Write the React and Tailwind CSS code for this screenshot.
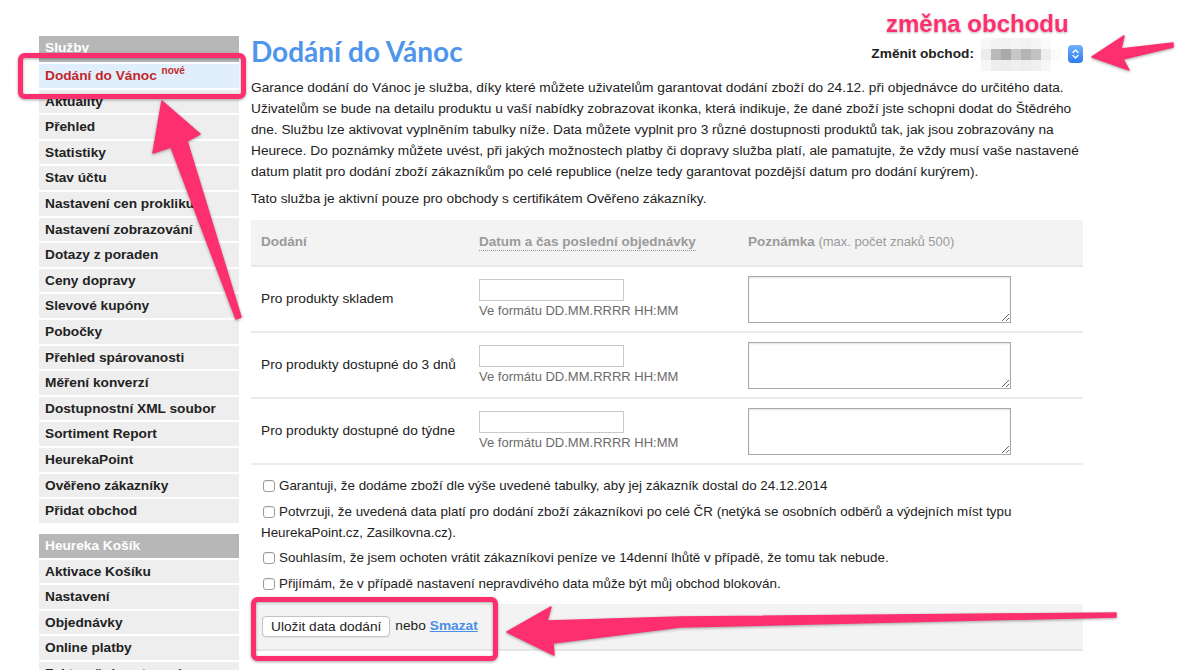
import React from 'react';

const sluzby = [
  'Aktuality',
  'Přehled',
  'Statistiky',
  'Stav účtu',
  'Nastavení cen prokliku',
  'Nastavení zobrazování',
  'Dotazy z poraden',
  'Ceny dopravy',
  'Slevové kupóny',
  'Pobočky',
  'Přehled spárovanosti',
  'Měření konverzí',
  'Dostupnostní XML soubor',
  'Sortiment Report',
  'HeurekaPoint',
  'Ověřeno zákazníky',
  'Přidat obchod',
];

const kosik = ['Aktivace Košíku', 'Nastavení', 'Objednávky', 'Online platby', 'Fakturační nastavení'];

const rows = ['Pro produkty skladem', 'Pro produkty dostupné do 3 dnů', 'Pro produkty dostupné do týdne'];

const checks = [
  'Garantuji, že dodáme zboží dle výše uvedené tabulky, aby jej zákazník dostal do 24.12.2014',
  'Potvrzuji, že uvedená data platí pro dodání zboží zákazníkovi po celé ČR (netýká se osobních odběrů a výdejních míst typu HeurekaPoint.cz, Zasilkovna.cz).',
  'Souhlasím, že jsem ochoten vrátit zákazníkovi peníze ve 14denní lhůtě v případě, že tomu tak nebude.',
  'Přijímám, že v případě nastavení nepravdivého data může být můj obchod blokován.',
];

// pixelated (blurred) shop name in the select
const blur = [
  ['#f7f7f7', '#f3f3f3', '#f1f1f1', '#f4f4f4', '#f2f2f2', '#f5f5f5', '#fafafa', '#ffffff'],
  ['#ececec', '#b9b9b9', '#a9a9a9', '#c6c6c6', '#b4b4b4', '#c2c2c2', '#eeeeee', '#fbfbfb'],
  ['#f6f6f6', '#eeeeee', '#ececec', '#efefef', '#ededed', '#f0f0f0', '#f7f7f7', '#ffffff'],
];

const PINK = '#fd2f6f';

const Annotations = () => (
  <svg
    className="absolute left-0 top-0 pointer-events-none [filter:drop-shadow(0_1px_1.5px_rgba(0,0,0,0.35))]"
    width="1200"
    height="670"
    viewBox="0 0 1200 670"
  >
    <rect x="20.5" y="55.5" width="223" height="41" rx="4" fill="none" stroke={PINK} strokeWidth="5" />
    <rect x="253.5" y="599.5" width="242" height="59" rx="4" fill="none" stroke={PINK} strokeWidth="5" />
    {/* arrow to sidebar item */}
    <polygon
      points="162,101 200,134 187,141 241,317 236,319 171,147 153,153"
      fill={PINK}
      stroke={PINK}
      strokeWidth="1.5"
      strokeLinejoin="round"
    />
    {/* arrow to shop switcher */}
    <polygon
      points="1092,57 1124,36 1121,49 1173,43 1173,47 1123,59 1129,70"
      fill={PINK}
      stroke={PINK}
      strokeWidth="1.5"
      strokeLinejoin="round"
    />
    {/* arrow to save button */}
    <polygon
      points="507,632 551,607 547,621 680,617 1116,613 1116,617 680,627 553,643 554,655"
      fill={PINK}
      stroke={PINK}
      strokeWidth="1.5"
      strokeLinejoin="round"
    />
  </svg>
);

const Sidebar = () => (
  <aside className="w-[200px] shrink-0 ml-[39px] pt-[36px] font-bold text-[13.7px] text-[#222]">
    <div className="h-[26px] leading-[24px] px-[6px] bg-[#b7b7b7] text-white">Služby</div>
    <div className="mt-[2px] h-[23.6px] leading-[23.6px] px-[6px] bg-[#e1eefb] text-[#c3272b] whitespace-nowrap">
      Dodání do Vánoc <sup className="text-[10px] relative -top-[6px] ml-[1px]">nové</sup>
    </div>
    {sluzby.map((item) => (
      <div key={item} className="mt-[2px] h-[23.6px] leading-[23.6px] px-[6px] bg-[#eeeeee] whitespace-nowrap overflow-hidden">
        {item}
      </div>
    ))}
    <div className="mt-[11px] h-[24px] leading-[24px] px-[6px] bg-[#b7b7b7] text-white">Heureka Košík</div>
    {kosik.map((item) => (
      <div key={item} className="mt-[2px] h-[23.6px] leading-[23.6px] px-[6px] bg-[#eeeeee] whitespace-nowrap overflow-hidden">
        {item}
      </div>
    ))}
  </aside>
);

const ShopSelect = () => (
  <div className="flex items-center mt-[4px] h-[32px]">
    <span className="font-bold text-[13.7px] text-[#222]">Změnit obchod:</span>
    <div className="ml-[7px] flex flex-col">
      {blur.map((row, r) => (
        <div key={r} className="flex">
          {row.map((c, i) => (
            <div key={i} className="w-[10px] h-[11px]" style={{ background: c }} />
          ))}
        </div>
      ))}
    </div>
    <div className="ml-[7px] w-[15px] h-[18px] rounded-[4px] bg-gradient-to-b from-[#73b0fc] to-[#2c7bef] flex items-center justify-center">
      <svg width="7" height="12" viewBox="0 0 7 12" fill="none" stroke="white" strokeWidth="1.3" strokeLinecap="round" strokeLinejoin="round">
        <path d="M1 4.5 L3.5 2 L6 4.5" />
        <path d="M1 7.5 L3.5 10 L6 7.5" />
      </svg>
    </div>
  </div>
);

export default function App() {
  return (
    <div className="relative w-[1200px] h-[670px] overflow-hidden bg-white font-['Liberation_Sans',Arial,sans-serif]">
      <div className="flex">
        <Sidebar />

        <main className="ml-[12px] w-[832px] pt-[34px] text-[13.7px] text-[#222]">
          <div className="flex justify-between items-start h-[34px]">
            <h1 className="font-['Lato',sans-serif] font-bold text-[28px] leading-[34px] text-[#4f95ec]">Dodání do Vánoc</h1>
            <ShopSelect />
          </div>

          <p className="mt-[9px] leading-[21px]">
            Garance dodání do Vánoc je služba, díky které můžete uživatelům garantovat dodání zboží do 24.12. při objednávce do
            určitého data. Uživatelům se bude na detailu produktu u vaší nabídky zobrazovat ikonka, která indikuje, že dané zboží
            jste schopni dodat do Štědrého dne. Službu lze aktivovat vyplněním tabulky níže. Data můžete vyplnit pro 3 různé
            dostupnosti produktů tak, jak jsou zobrazovány na Heurece. Do poznámky můžete uvést, při jakých možnostech platby či
            dopravy služba platí, ale pamatujte, že vždy musí vaše nastavené datum platit pro dodání zboží zákazníkům po celé
            republice (nelze tedy garantovat pozdější datum pro dodání kurýrem).
          </p>
          <p className="mt-[6px] leading-[21px]">Tato služba je aktivní pouze pro obchody s certifikátem Ověřeno zákazníky.</p>

          <table className="mt-[11px] w-[832px] border-collapse table-fixed">
            <colgroup>
              <col className="w-[228px]" />
              <col className="w-[269px]" />
              <col />
            </colgroup>
            <thead>
              <tr className="h-[46px] bg-[#f3f3f3] border-b-2 border-[#e8e8e8] text-left text-[#9a9a9a]">
                <th className="pl-[10px] font-bold text-[13.5px]">Dodání</th>
                <th className="font-bold text-[13.5px]">
                  <span className="border-b border-dotted border-[#9a9a9a] pb-[1px]">Datum a čas poslední objednávky</span>
                </th>
                <th className="font-normal text-[13px]">
                  <span className="font-bold text-[13.5px]">Poznámka</span> (max. počet znaků 500)
                </th>
              </tr>
            </thead>
            <tbody>
              {rows.map((label) => (
                <tr key={label} className="h-[66px] border-b-2 border-[#ececec]">
                  <td className="pl-[10px] align-middle">{label}</td>
                  <td className="align-middle">
                    <input type="text" className="block w-[145px] h-[22px] border border-[#c9c9c9] bg-white outline-none" />
                    <div className="mt-[2px] leading-[16px] text-[13px] text-[#6b6b6b]">Ve formátu DD.MM.RRRR HH:MM</div>
                  </td>
                  <td className="align-middle">
                    <textarea className="block w-[263px] h-[47px] border border-[#a9a9a9] bg-white outline-none shadow-[inset_0_1px_2px_rgba(0,0,0,0.12)]" />
                  </td>
                </tr>
              ))}
            </tbody>
          </table>

          <div className="pt-[10px] pl-[10px] pr-[20px] leading-[21px] text-[13.4px]">
            {checks.map((text) => (
              <p key={text} className="mb-[4.5px]">
                <input
                  type="checkbox"
                  className="appearance-none inline-block w-[12px] h-[12px] ml-[2px] mr-[4px] align-[-2px] border border-[#9d9d9d] rounded-[3px] bg-white shadow-[inset_0_1px_1px_rgba(0,0,0,0.08)]"
                />
                {text}
              </p>
            ))}
          </div>

          <div className="mt-[10px] h-[47px] bg-[#f3f3f3] border-b-2 border-[#e6e6e6] flex items-center pl-[11px]">
            <button className="h-[21px] px-[8px] bg-white border border-[#c4c4c4] rounded-[4px] text-[13.7px] text-[#222] leading-[19px] shadow-[0_1px_1px_rgba(0,0,0,0.06)]">
              Uložit data dodání
            </button>
            <span className="ml-[5px]">nebo</span>
            <a href="#" className="ml-[4px] font-bold text-[#4a8fe6] underline">Smazat</a>
          </div>
        </main>
      </div>

      <Annotations />
      <div className="absolute left-[886px] top-[6px] font-bold text-[24px] text-[#fd2f6f] [text-shadow:0_0_2px_#fff,0_1px_2px_rgba(0,0,0,0.35)]">
        změna obchodu
      </div>
    </div>
  );
}
